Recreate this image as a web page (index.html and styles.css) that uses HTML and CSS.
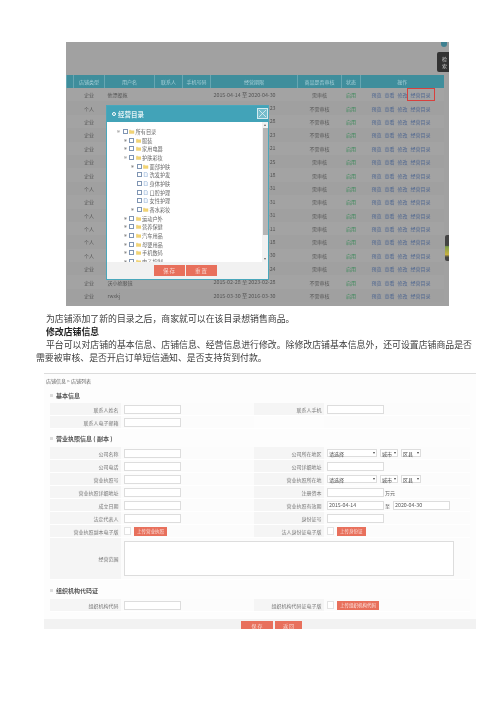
FILE: index.html
```html
<!DOCTYPE html>
<html lang="zh">
<head>
<meta charset="utf-8">
<title>修改店铺信息</title>
<link rel="stylesheet" href="styles.css">
</head>
<body>
<svg class="defs" width="0" height="0" aria-hidden="true">
  <symbol id="folder" viewBox="0 0 10 8"><path d="M0.5 1.5h3l1 1h5v5h-9z" fill="#f3d675" stroke="#e0b94f" stroke-width=".5"/></symbol>
  <symbol id="file" viewBox="0 0 8 8"><path d="M1.5.5h3.500l1.500 1.500v5.500h-5z" fill="#f4f8fd" stroke="#6f97c9" stroke-width=".7"/></symbol>
  <symbol id="plus" viewBox="0 0 5 5"><rect x=".5" y=".5" width="4" height="4" fill="#eee" stroke="#aaa" stroke-width=".5"/><path d="M1.200 2.500h2.600M2.500 1.200v2.600" stroke="#444" stroke-width=".6"/></symbol>
  <symbol id="minus" viewBox="0 0 5 5"><rect x=".5" y=".5" width="4" height="4" fill="#eee" stroke="#aaa" stroke-width=".5"/><path d="M1.200 2.500h2.600" stroke="#444" stroke-width=".6"/></symbol>
</svg>

<section class="fig-list">
  <div class="float-dot"></div>
  <div class="float-search"><span>检</span><span>索</span></div>
  <div class="float-meter"></div>
  <table class="shops">
    <colgroup><col class="c0"><col class="c1"><col class="c2"><col class="c3"><col class="c4"><col class="c5"><col class="c6"><col class="c7"><col class="c8"></colgroup>
    <thead><tr><th></th><th>店铺类型</th><th>用户名</th><th>联系人</th><th>手机号码</th><th>经营期限</th><th>商品是否审核</th><th>状态</th><th>操作</th></tr></thead>
    <tbody id="rows"></tbody>
  </table>

  <div class="modal">
    <div class="modal-title"><span class="ring"></span><span>经营目录</span><span class="close"><svg viewBox="0 0 10 10"><path d="M1 1l8 8M9 1l-8 8" stroke="#eaf5f8" stroke-width=".8"/></svg></span></div>
    <div class="modal-body">
      <div class="tree" id="tree"></div>
      <div class="vscroll"><span class="arrow up-a"></span><span class="thumb"></span><span class="arrow down-a"></span></div>
    </div>
    <div class="modal-foot"><span class="btn">保 存</span><span class="btn">重 置</span></div>
  </div>
</section>

<section class="text">
  <p>为店铺添加了新的目录之后，商家就可以在该目录想销售商品。</p>
  <p class="head">修改店铺信息</p>
  <p class="just">平台可以对店铺的基本信息、店铺信息、经营信息进行修改。除修改店铺基本信息外，还可设置店铺商品是否需要被审核、是否开启订单短信通知、是否支持货到付款。</p>
</section>

<section class="fig-form">
  <div class="crumb">店铺信息 &gt; 店铺列表</div>

  <h3 class="sec first"><i></i>基本信息</h3>
  <div class="rows">
    <div class="row"><label>联系人姓名</label><div class="val"><span class="inp"></span></div><label>联系人手机</label><div class="val"><span class="inp"></span></div></div>
    <div class="row"><label>联系人电子邮箱</label><div class="val"><span class="inp"></span></div><label class="blank"></label><div class="val"></div></div>
  </div>

  <h3 class="sec lic"><i></i>营业执照信息 ( 副本 )</h3>
  <div class="rows">
    <div class="row"><label>公司名称</label><div class="val"><span class="inp"></span></div><label>公司所在地区</label><div class="val"><span class="sel wide">请选择<b></b></span><span class="sel mid">城市<b></b></span><span class="sel mid2">区县<b></b></span></div></div>
    <div class="row"><label>公司电话</label><div class="val"><span class="inp"></span></div><label>公司详细地址</label><div class="val"><span class="inp"></span></div></div>
    <div class="row"><label>营业执照号</label><div class="val"><span class="inp"></span></div><label>营业执照所在地</label><div class="val"><span class="sel wide">请选择<b></b></span><span class="sel mid">城市<b></b></span><span class="sel mid2">区县<b></b></span></div></div>
    <div class="row"><label>营业执照详细地址</label><div class="val"><span class="inp"></span></div><label>注册资本</label><div class="val"><span class="inp"></span><em>万元</em></div></div>
    <div class="row"><label>成立日期</label><div class="val"><span class="inp"></span></div><label>营业执照有效期</label><div class="val"><span class="inp date">2015-04-14</span><em>至</em><span class="inp date">2020-04-30</span></div></div>
    <div class="row"><label>法定代表人</label><div class="val"><span class="inp"></span></div><label>身份证号</label><div class="val"><span class="inp"></span></div></div>
    <div class="row"><label>营业执照副本电子版</label><div class="val"><span class="thumbbox"></span><span class="up">上传营业执照</span></div><label>法人身份证电子版</label><div class="val"><span class="thumbbox"></span><span class="up">上传身份证</span></div></div>
    <div class="row tall"><label>经营范围</label><div class="val span3"><span class="area"></span></div></div>
  </div>

  <h3 class="sec org"><i></i>组织机构代码证</h3>
  <div class="rows">
    <div class="row"><label>组织机构代码</label><div class="val"><span class="inp"></span></div><label>组织机构代码证电子版</label><div class="val"><span class="thumbbox"></span><span class="up">上传组织机构代码</span></div></div>
  </div>

  <div class="actions"><span class="btn2 save">保 存</span><span class="btn2 back">返 回</span></div>
</section>

<script src="app.js"></script>
</body>
</html>
```

FILE: styles.css
```css
* { box-sizing: border-box; }
html, body { margin: 0; padding: 0; background: #fff; }
body { width: 500px; height: 707px; overflow: hidden; padding-top: 42px; font-family: "Noto Sans CJK SC", "Noto Sans", sans-serif; color: #333; }
.defs { position: absolute; }

/* first figure */
.fig-list { position: relative; width: 383px; height: 264px; margin-left: 66px; padding-top: 33px; background: #a1a1a1; filter: blur(.5px); overflow: hidden; }
.shops { width: 377px; border-collapse: collapse; table-layout: fixed; font-size: 5px; color: #555; }
.c0 { width: 7px; } .c1 { width: 31px; } .c2 { width: 50px; } .c3 { width: 28px; } .c4 { width: 28px; } .c5 { width: 87px; } .c6 { width: 44px; } .c7 { width: 19px; } .c8 { width: 83px; }
.shops th { height: 13px; padding: 0; background: #3f8e9c; color: #a9d0d8; font-weight: 400; border-left: 1px solid #67a6b2; }
.shops td { height: 13.4px; padding: 0; text-align: center; white-space: nowrap; overflow: hidden; background: #a3a3a3; }
.shops tr.alt td { background: #a0a0a0; }
.shops td.name { text-align: left; padding-left: 3px; }
.shops td.date { text-align: left; padding-left: 3px; font-size: 5.3px; }
.shops td.on { color: #3b8a5a; }
.ops { display: flex; justify-content: flex-end; gap: 3px; padding-right: 13px; color: #4e6690; align-items: center; }
.ops .mark { position: relative; }
.ops .mark::after { content: ""; position: absolute; left: -3px; right: -4px; top: -3.500px; bottom: -3px; border: 1px solid #d8403d; }
.float-dot { position: absolute; right: 2px; top: 0; width: 6px; height: 5px; border-radius: 0 0 3px 3px; background: #3f8090; }
.float-search { position: absolute; right: 0; top: 10px; width: 12px; height: 20px; background: #333; color: #ccc; font-size: 5px; border-radius: 2px 0 0 2px; display: flex; flex-direction: column; align-items: flex-end; justify-content: center; padding-right: 2px; line-height: 7px; }
.float-meter { position: absolute; right: 0; top: 193px; width: 4px; height: 26px; background: linear-gradient(#444 40%, #7fa04a 45%, #c8b040 75%, #444 85%); border-radius: 2px 0 0 2px; }

.modal { position: absolute; left: 40px; top: 63px; width: 163px; height: 175px; background: #fff; border: 1px solid #4aa7bb; display: flex; flex-direction: column; }
.modal-title { flex: none; height: 16px; background: #42a3b8; color: #dff0f3; font-size: 6.500px; font-weight: 700; display: flex; align-items: center; gap: 2px; padding-left: 5px; position: relative; }
.ring { width: 4px; height: 4px; border: 1px solid #fff; border-radius: 50%; }
.close { position: absolute; right: 0; top: 2px; width: 11px; height: 11px; background: #74bccb; border: 1px solid #d5ecf0; display: flex; }
.close svg { width: 100%; height: 100%; }
.modal-body { flex: 1; min-height: 0; display: flex; overflow: hidden; }
.tree { flex: 1; padding: 5px 0 0 10px; overflow: hidden; }
.tnode { height: 8.700px; display: flex; align-items: center; font-size: 5.200px; color: #666; white-space: nowrap; }
.tnode svg { flex: none; }
.tnode .exp { width: 3px; height: 3px; margin-right: 2.500px; }
.tnode .nox { width: 3px; margin-right: 2.500px; }
.tnode .cb { flex: none; width: 5px; height: 5px; border: .6px solid #7f95b3; background: #fff; margin-right: 1.500px; }
.tnode .ic { width: 5.500px; height: 5px; margin-right: 1px; }
.lv1 { padding-left: 6.500px; } .lv2 { padding-left: 14px; }
.vscroll { flex: none; width: 6px; background: #f1f1f1; display: flex; flex-direction: column; align-items: center; }
.vscroll .thumb { width: 5px; height: 107px; background: #b5b5b5; }
.arrow { flex: none; width: 0; height: 0; margin: 2px 0; border-left: 1.500px solid transparent; border-right: 1.500px solid transparent; }
.up-a { border-bottom: 2px solid #666; }
.down-a { margin-top: auto; border-top: 2px solid #666; }
.modal-foot { flex: none; height: 17px; background: #f1f1f1; display: flex; justify-content: center; gap: 1px; padding: 3px 5px 3px 0; }
.btn { width: 31px; background: #e8705c; color: #f7d5cf; font-size: 5.500px; display: flex; align-items: center; justify-content: center; }

/* prose */
.text { margin: 6px 28px 0 36px; font-size: 8.900px; line-height: 13px; color: #3c3c3c; filter: blur(.25px); }
.text p { margin: 0; text-indent: 10px; }
.text .just { text-align: justify; }
.text .head { font-weight: 700; color: #222; }

/* second figure */
.fig-form { width: 432px; margin: 9px 0 0 44px; border-top: 1px solid #dcdcdc; font-size: 5px; color: #777; background: #fdfdfd; filter: blur(.4px); }
.crumb { height: 12px; padding: 1px 2px 0; display: flex; align-items: center; color: #666; }
.sec { margin: 0 0 0 6px; display: flex; align-items: center; gap: 3px; font-size: 6px; font-weight: 700; color: #555; }
.sec.first { margin-top: 1px; height: 16px; }
.sec.lic { margin-top: 1px; height: 17px; }
.sec.org { margin-top: 1px; height: 18px; }
.sec i { width: 3px; height: 3px; background: #ddd; }
.rows { margin: 0 6px; display: flex; flex-direction: column; }
.row { display: grid; grid-template-columns: 71px 133px 70px 146px; height: 13px; border-bottom: 1px solid #fff; align-items: stretch; }
.row label { background: #f5f5f5; display: flex; align-items: center; justify-content: flex-end; padding-right: 2.500px; color: #777; }
.row label.blank { background: #fdfdfd; }
.val { display: flex; align-items: center; gap: 3px; padding-left: 3px; color: #666; background: #fcfcfc; }
.val em { font-style: normal; margin-left: -2px; }
.inp { width: 57px; height: 9px; background: #fff; border: 1px solid #ddd; display: flex; align-items: center; padding-left: 1px; font-size: 5.300px; color: #555; }
.sel { height: 8px; background: #fff; border: 1px solid #ddd; display: flex; align-items: center; justify-content: space-between; padding: 0 1px; font-size: 5px; color: #444; }
.sel b { width: 0; height: 0; border-left: 1.200px solid transparent; border-right: 1.200px solid transparent; border-top: 2px solid #444; }
.sel.wide { width: 50px; } .sel.mid { width: 18px; } .sel.mid2 { width: 20px; }
.thumbbox { width: 7px; height: 8px; background: #fff; border: 1px solid #e3e3e3; }
.up { height: 9px; padding: 0 3px; background: #e8705c; color: #fbe0db; font-size: 4.500px; display: flex; align-items: center; }
.row.tall { height: 42px; }
.span3 { grid-column: 2 / 5; padding-top: 3px; align-items: flex-start; }
.area { width: 330px; height: 35px; background: #fff; border: 1px solid #ddd; }
.actions { margin-top: 7px; height: 10px; background: #f2f2f2; display: flex; padding: 2px 0 0 197px; gap: 2px; }
.btn2 { height: 8px; background: #e8705c; color: #f9dcd6; font-size: 5px; display: flex; align-items: center; justify-content: center; }
.save { width: 32px; } .back { width: 27px; }
```

FILE: app.js
```js
var data = [
  ["企业","他漂蝶拖","2015-04-14 至 2020-04-30","需审核"],
  ["个人","","2015-03-23 至 2020-03-23","不需审核"],
  ["企业","","2015-03-28 至 2020-03-28","不需审核"],
  ["企业","","2015-03-23 至 2020-03-23","不需审核"],
  ["企业","","2015-03-21 至 2020-03-21","不需审核"],
  ["企业","","2015-03-25 至 2020-03-25","需审核"],
  ["企业","","2015-03-18 至 2020-03-18","需审核"],
  ["个人","","2015-03-31 至 2020-03-31","需审核"],
  ["企业","","2015-03-31 至 2020-03-31","需审核"],
  ["个人","","2015-03-31 至 2020-03-31","需审核"],
  ["个人","","2015-03-11 至 2020-03-11","需审核"],
  ["个人","","2015-03-18 至 2020-03-18","需审核"],
  ["个人","","2015-03-30 至 2020-03-30","需审核"],
  ["企业","","2015-03-24 至 2020-03-24","需审核"],
  ["企业","沃小绝眼镜","2015-02-28 至 2023-02-28","不需审核"],
  ["企业","rwxkj","2015-03-30 至 2016-03-30","不需审核"]
];
document.getElementById("rows").innerHTML = data.map(function (r, i) {
  return '<tr class="' + (i % 2 ? "alt" : "") + '"><td></td><td>' + r[0] + '</td><td class="name">' + r[1] +
    '</td><td></td><td></td><td class="date">' + r[2] + '</td><td>' + r[3] +
    '</td><td class="on">启用</td><td><div class="ops"><span>预览</span><span>查看</span><span>修改</span><span class="' +
    (i === 0 ? "mark" : "") + '">经营目录</span></div></td></tr>';
}).join("");

var tree = [
  [0,"minus","folder","所有目录"],[1,"plus","folder","服装"],[1,"plus","folder","家用电器"],
  [1,"minus","folder","护肤彩妆"],[2,"plus","folder","面部护肤"],[2,"","file","洗发护发"],
  [2,"","file","身体护肤"],[2,"","file","口腔护理"],[2,"","file","女性护理"],
  [2,"plus","folder","香水彩妆"],[1,"plus","folder","运动户外"],[1,"plus","folder","营养保健"],
  [1,"plus","folder","汽车用品"],[1,"plus","folder","母婴用品"],[1,"plus","folder","手机数码"],
  [1,"plus","folder","电子控制"]
];
document.getElementById("tree").innerHTML = tree.map(function (n) {
  var exp = n[1] ? '<svg class="exp"><use href="#' + n[1] + '"/></svg>' : '<span class="nox"></span>';
  return '<div class="tnode lv' + n[0] + '">' + exp + '<span class="cb"></span><svg class="ic"><use href="#' + n[2] + '"/></svg><span>' + n[3] + '</span></div>';
}).join("");
```
